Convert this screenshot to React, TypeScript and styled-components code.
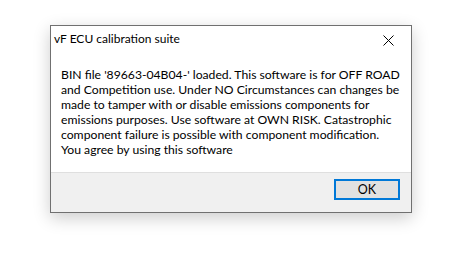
import React from "react";
import styled, { createGlobalStyle } from "styled-components";

const GlobalStyle = createGlobalStyle`
  html, body {
    margin: 0;
    padding: 0;
    background: #ffffff;
  }
`;

const Page = styled.div`
  padding: 25px 0 0 50px;
  height: 262px;
  box-sizing: border-box;
  font-family: Lato, "Noto Sans", sans-serif;
  font-size: 12px;
  color: #000;
`;

const Window = styled.div`
  width: 362px;
  height: 188px;
  box-sizing: border-box;
  border: 1px solid #707070;
  background: #ffffff;
  display: flex;
  flex-direction: column;
  box-shadow: 0 5px 16px rgba(0, 0, 0, 0.2);
`;

const TitleBar = styled.div`
  height: 26px;
  display: flex;
  align-items: center;
  justify-content: space-between;
  padding: 0 0 0 3px;
`;

const Title = styled.span`
  font-size: 12px;
  line-height: 16px;
`;

const CloseButton = styled.div`
  width: 46px;
  height: 26px;
  display: flex;
  align-items: center;
  justify-content: center;
  margin-top: 2px;
`;

const Body = styled.div`
  flex: 1;
  padding: 15px 10px 0 10px;
`;

const Line = styled.div`
  line-height: 15px;
  font-size: 12.2px;
  white-space: nowrap;
`;

const Footer = styled.div`
  height: 40px;
  box-sizing: border-box;
  border-top: 1px solid #dfdfdf;
  background: #f0f0f0;
  display: flex;
  justify-content: flex-end;
  align-items: flex-start;
  padding: 6px 11px 0 0;
`;

const OkButton = styled.button`
  width: 66px;
  height: 21px;
  box-sizing: border-box;
  border: 2px solid #0078d7;
  background: #e1e1e1;
  font-family: inherit;
  font-size: 12.5px;
  color: #000;
  padding: 0;
`;

const lines = [
  "BIN file '89663-04B04-' loaded. This software is for OFF ROAD",
  "and Competition use. Under NO Circumstances can changes be",
  "made to tamper with or disable emissions components for",
  "emissions purposes. Use software at OWN RISK. Catastrophic",
  "component failure is possible with component modification.",
  "You agree by using this software",
];

const App: React.FC = () => {
  return (
    <Page>
      <GlobalStyle />
      <Window>
        <TitleBar>
          <Title>vF ECU calibration suite</Title>
          <CloseButton>
            <svg width="11" height="11" viewBox="0 0 11 11">
              <path d="M0.5 0.5 L10.5 10.5 M10.5 0.5 L0.5 10.5" stroke="#000" strokeWidth="1" />
            </svg>
          </CloseButton>
        </TitleBar>
        <Body>
          {lines.map((l) => (
            <Line key={l}>{l}</Line>
          ))}
        </Body>
        <Footer>
          <OkButton>OK</OkButton>
        </Footer>
      </Window>
    </Page>
  );
};

export default App;
